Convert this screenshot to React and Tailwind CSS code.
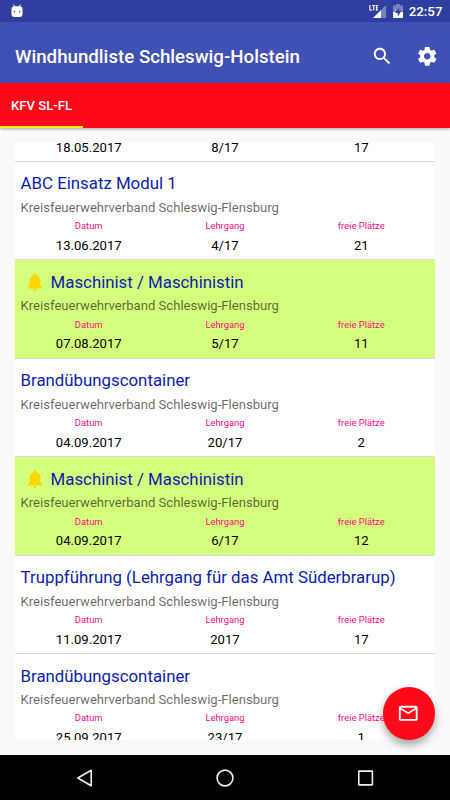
const courses = [
  { title: "ABC Einsatz Modul 1", date: "13.06.2017", course: "4/17", free: "21" },
  { title: "Maschinist / Maschinistin", date: "07.08.2017", course: "5/17", free: "11", marked: true },
  { title: "Brandübungscontainer", date: "04.09.2017", course: "20/17", free: "2" },
  { title: "Maschinist / Maschinistin", date: "04.09.2017", course: "6/17", free: "12", marked: true },
  { title: "Truppführung (Lehrgang für das Amt Süderbrarup)", date: "11.09.2017", course: "2017", free: "17" },
  { title: "Brandübungscontainer", date: "25.09.2017", course: "23/17", free: "1" },
];

function Icon({ d, className }) {
  return (
    <svg viewBox="0 0 24 24" fill="currentColor" className={className}>
      <path d={d} />
    </svg>
  );
}

const icons = {
  search:
    "M15.5 14h-.79l-.28-.27C15.41 12.59 16 11.11 16 9.5 16 5.91 13.09 3 9.5 3S3 5.91 3 9.5 5.91 16 9.5 16c1.61 0 3.09-.59 4.23-1.57l.27.28v.79l5 4.99L20.49 19l-4.99-5zm-6 0C7.01 14 5 11.99 5 9.5S7.01 5 9.5 5 14 7.01 14 9.5 11.99 14 9.5 14z",
  settings:
    "M19.43 12.98c.04-.32.07-.64.07-.98s-.03-.66-.07-.98l2.11-1.65c.19-.15.24-.42.12-.64l-2-3.46c-.12-.22-.39-.3-.61-.22l-2.49 1c-.52-.4-1.08-.73-1.69-.98l-.38-2.65C14.46 2.18 14.25 2 14 2h-4c-.25 0-.46.18-.49.42l-.38 2.65c-.61.25-1.17.59-1.69.98l-2.49-1c-.23-.09-.49 0-.61.22l-2 3.46c-.13.22-.07.49.12.64l2.11 1.65c-.04.32-.07.65-.07.98s.03.66.07.98l-2.11 1.65c-.19.15-.24.42-.12.64l2 3.46c.12.22.39.3.61.22l2.49-1c.52.4 1.08.73 1.69.98l.38 2.65c.03.24.24.42.49.42h4c.25 0 .46-.18.49-.42l.38-2.65c.61-.25 1.17-.59 1.69-.98l2.49 1c.23.09.49 0 .61-.22l2-3.46c.12-.22.07-.49-.12-.64l-2.11-1.65zM12 15.5c-1.93 0-3.5-1.57-3.5-3.5s1.57-3.5 3.5-3.5 3.5 1.57 3.5 3.5-1.57 3.5-3.5 3.5z",
  bell: "M12 22c1.1 0 2-.9 2-2h-4c0 1.1.89 2 2 2zm6-6v-5c0-3.07-1.64-5.64-4.5-6.32V4c0-.83-.67-1.5-1.5-1.5s-1.5.67-1.5 1.5v.68C7.63 5.36 6 7.92 6 11v5l-2 2v1h16v-1l-2-2z",
  mail: "M20 4H4c-1.1 0-1.99.9-1.99 2L2 18c0 1.1.9 2 2 2h16c1.1 0 2-.9 2-2V6c0-1.1-.9-2-2-2zm0 14H4V8l8 5 8-5v10zm-8-7L4 6h16l-8 5z",
};

function StatusBar() {
  return (
    <div className="flex h-[22px] shrink-0 items-center bg-[#303f9f] pr-[7.5px] pl-[11px] text-white">
      <svg viewBox="0 0 12 14" className="h-[14px] w-3">
        <path d="M2.5 0.5 4 3M9.5 0.5 8 3" stroke="white" strokeWidth="0.9" />
        <path d="M.5 5Q.5 2.2 3.2 2.2h5.6Q11.5 2.2 11.5 5v5Q11.5 13 8.5 13h-5Q.5 13 .5 10z" fill="white" />
        <circle cx="3.4" cy="7.7" r="0.8" fill="#303f9f" />
        <circle cx="8.6" cy="7.7" r="0.8" fill="#303f9f" />
      </svg>
      <svg viewBox="0 0 18 15" className="ml-auto h-[15px] w-[18px]">
        <path d="M17.2 1v13H4z" fill="white" opacity="0.35" />
        <path d="M12 6.2V14H4z" fill="white" />
        <path d="M.9 1v5h2.3M3.2 1.5h3M4.7 1.5v5M9.2 1.5H7.4V6h1.8M7.4 3.7h1.6" fill="none" stroke="white" strokeWidth="1.1" />
      </svg>
      <svg viewBox="0 0 10 14" className="ml-[6px] h-[14px] w-[10px]">
        <path d="M3 0h4v1.5h3V8H0V1.5h3z" fill="white" opacity="0.35" />
        <path d="M0 8h10v6H0z" fill="white" />
        <path d="M6.2 3.5 2.2 8.9h2.6v3.6l3.5-5.6H6.2z" fill="#303f9f" />
      </svg>
      <span className="ml-[6px] pt-[2px] text-[13.3px] leading-none font-medium">22:57</span>
    </div>
  );
}

function Values({ date, course, free }) {
  return (
    <div className="grid h-[17px] w-full grid-cols-3 text-center text-[13.1px] leading-[17px] text-black">
      <span>{date}</span>
      <span>{course}</span>
      <span>{free}</span>
    </div>
  );
}

function Course({ title, marked, ...values }) {
  return (
    <li
      className={`h-[98.4375px] shrink-0 border-t border-[#d8d8d8] px-[5.6px] pt-[10.4px] ${marked ? "bg-[#d4ff7c]" : "bg-white"}`}
    >
      <h2 className="flex h-[22px] items-center text-[16.82px] leading-[22px] whitespace-nowrap text-[#0b1cb0]">
        {marked && <Icon d={icons.bell} className="mr-[5px] ml-[3px] size-[22px] text-[#ffd600]" />}
        {title}
      </h2>
      <p className="mt-[4.6px] h-[17px] text-[13.1px] leading-[17px] text-black/60">Kreisfeuerwehrverband Schleswig-Flensburg</p>
      <div className="mt-[3.3px] grid h-[13px] grid-cols-3 text-center text-[9.4px] leading-[13px] text-[#ff0a82]">
        <span>Datum</span>
        <span>Lehrgang</span>
        <span>freie Plätze</span>
      </div>
      <div className="mt-[4.7px]">
        <Values {...values} />
      </div>
    </li>
  );
}

export default function App() {
  return (
    <div className="relative flex h-[800px] w-[450px] flex-col overflow-hidden bg-[#fafafa] font-['Roboto',sans-serif]">
      <StatusBar />
      <header className="flex h-[60.5px] shrink-0 items-center bg-[#3f51b5] pt-[9px] pr-[11.5px] pl-[15px] text-white">
        <h1 className="pt-px text-[18.7px] leading-6 font-medium whitespace-nowrap">Windhundliste Schleswig-Holstein</h1>
        <Icon d={icons.search} className="-mt-[2px] ml-auto size-[22.5px]" />
        <Icon d={icons.settings} className="-mt-[2px] ml-[23px] size-[22.5px]" />
      </header>
      <nav className="flex h-[45px] shrink-0 bg-[#ff0a1a] shadow-[0_1px_3px_rgba(0,0,0,0.35)]">
        <div className="flex w-[83px] items-center justify-center border-b-2 border-[#fff000] pt-[3px] text-[13.1px] font-medium text-white">
          KFV SL-FL
        </div>
      </nav>

      <main className="mx-[15px] mt-[14.5px] h-[598px] shrink-0 overflow-hidden bg-white">
        <div className="flex h-[19px] items-end px-[5.6px] pb-[5px]">
          <Values date="18.05.2017" course="8/17" free="17" />
        </div>
        <ul className="flex flex-col">
          {courses.map((course, i) => (
            <Course key={i} {...course} />
          ))}
        </ul>
      </main>

      <button className="absolute top-[687px] left-[382.5px] flex size-[52.5px] items-center justify-center rounded-full bg-[#ff0a1a] pr-px text-white shadow-[0_5px_9px_rgba(0,0,0,0.35)]">
        <Icon d={icons.mail} className="size-[22.5px]" />
      </button>

      <footer className="mt-auto flex h-[45px] shrink-0 items-center justify-between bg-black px-[76px]">
        <svg viewBox="0 0 17 18" className="h-[18px] w-[17px]" fill="none" stroke="#eee" strokeWidth="1.6">
          <path d="M15.2 1.3v15.4L1.8 9z" strokeLinejoin="round" />
        </svg>
        <svg viewBox="0 0 18 18" className="size-[18px]" fill="none" stroke="#eee" strokeWidth="1.6">
          <circle cx="9" cy="9" r="7.9" />
        </svg>
        <svg viewBox="0 0 17 18" className="h-[18px] w-[17px]" fill="none" stroke="#eee" strokeWidth="1.6">
          <rect x="1.8" y="2.1" width="13.6" height="13.8" rx="0.5" />
        </svg>
      </footer>
    </div>
  );
}
